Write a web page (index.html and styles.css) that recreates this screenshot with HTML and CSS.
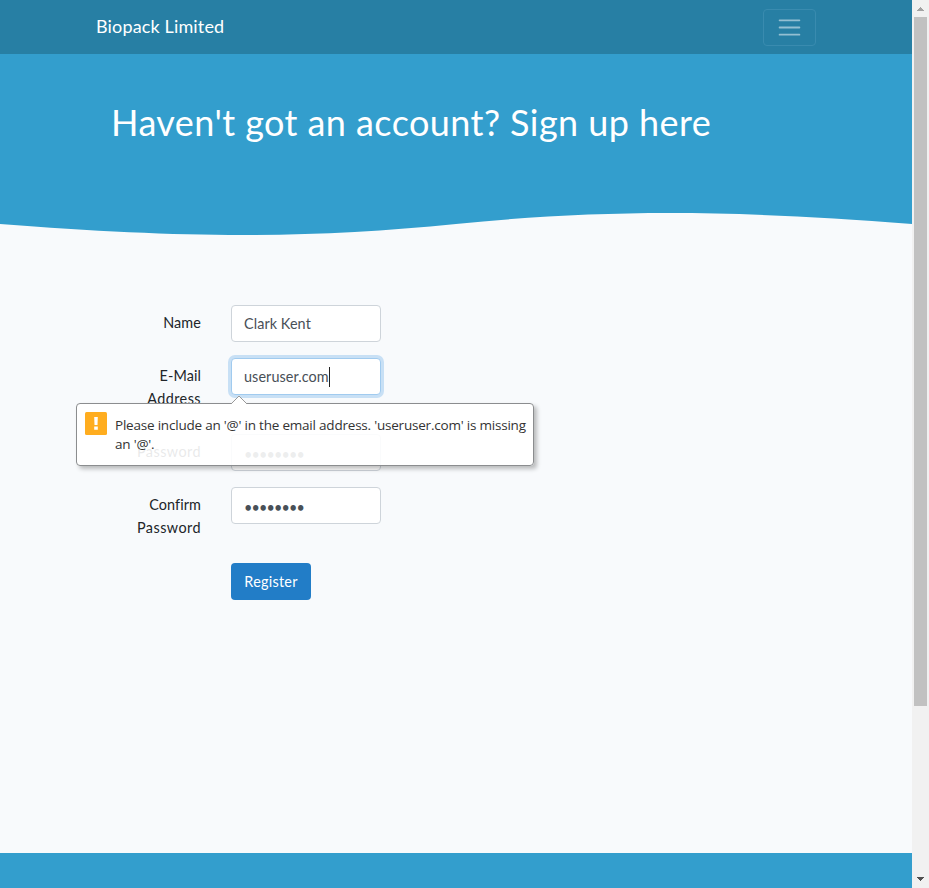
FILE: index.html
```html
<!DOCTYPE html>
<html lang="en">
<head>
<meta charset="utf-8">
<title>Biopack Limited</title>
<link rel="stylesheet" href="styles.css">
</head>
<body>
<div class="page">
  <nav class="navbar">
    <a class="brand">Biopack Limited</a>
    <button class="toggler" type="button" aria-label="Toggle navigation">
      <svg width="27" height="27" viewBox="0 0 30 30"><path d="M4 7h22M4 15h22M4 23h22" stroke="#fff" stroke-opacity=".5" stroke-width="2" stroke-linecap="round" stroke-miterlimit="10"/></svg>
    </button>
  </nav>
  <header class="hero"><h1>Haven't got an account? Sign up here</h1></header>
  <svg class="wave" width="912" height="24" viewBox="0 212 912 24"><path d="M0 212V224C186 238.6 310 238.6 456 224C602 209.4 726 209.4 912 224V212Z" fill="#339ecd"/></svg>
  <main class="form">
    <div class="row"><label for="name">Name</label><input id="name" class="control" value="Clark Kent"></div>
    <div class="row">
      <label for="email">E-Mail <span class="wide">Address</span></label>
      <div class="field">
        <input id="email" class="control focused" value="useruser.com">
        <i class="caret"></i>
        <div class="bubble">
          <svg class="arrow" width="18" height="9" viewBox="0 0 18 9"><path d="M1 9L9 1L17 9" fill="#fff" stroke="#999"/></svg>
          <svg class="warn" width="22" height="23" viewBox="0 0 22 23"><rect width="22" height="23" rx="1.5" fill="#ffad1f"/><path d="M9.2 5h3.6l-.3 8h-3zM9.2 14.5h3.6v3.2H9.2z" fill="#fff"/></svg>
          <p>Please include an '@' in the email address. 'useruser.com' is missing<br>an '@'.</p>
        </div>
      </div>
    </div>
    <div class="row"><label for="pw"><span class="wide">Password</span></label><input id="pw" class="control dots" type="password" value="password"></div>
    <div class="row"><label for="pw2">Confirm <span class="wide">Password</span></label><input id="pw2" class="control dots" type="password" value="password"></div>
    <button class="submit" type="button">Register</button>
  </main>
  <footer class="footer"></footer>
</div>
<aside class="scrollbar">
  <svg width="17" height="17" viewBox="0 0 17 17"><path d="M5 11V10h1V9h1V8h1V7h1v1h1v1h1v1h1v1z" fill="#a3a3a3"/></svg>
  <div class="thumb"></div>
  <svg class="down" width="17" height="17" viewBox="0 0 17 17"><path d="M5 6h7v1h-1v1h-1v1H9v1H8V9H7V8H6V7H5z" fill="#505050"/></svg>
</aside>
</body>
</html>
```
FILE: styles.css
```css
* { box-sizing: border-box; }
body {
  margin: 0;
  height: 888px;
  display: flex;
  overflow: hidden;
  background: #f8fafc;
  color: #212529;
  font: 14.4px/23px Lato, "Open Sans", sans-serif;
}
svg { display: block; }
.page { width: 912px; display: flex; flex-direction: column; }
.navbar {
  height: 54px;
  flex: none;
  display: flex;
  align-items: center;
  justify-content: space-between;
  padding: 0 96px;
  background: #277fa4;
}
.brand { padding-bottom: 2px; color: #fff; font-size: 18px; letter-spacing: .15px; white-space: nowrap; }
.toggler {
  width: 53px;
  height: 37px;
  margin-top: 1px;
  display: grid;
  place-items: center;
  padding: 0;
  background: none;
  border: 1px solid #398baf;
  border-radius: 4px;
}
.hero { height: 158px; flex: none; background: #339ecd; padding: 47px 111px 0; }
h1 { margin: 0; color: #fff; font-size: 36px; font-weight: 400; line-height: 43px; letter-spacing: .43px; white-space: nowrap; }
.wave { flex: none; }
.form { flex: 1; padding: 69px 111px 0; }
.row { display: flex; align-items: flex-start; gap: 30px; margin-bottom: 16px; }
label { width: 90px; padding: 6px 0 8px; text-align: right; letter-spacing: .1px; }
.wide { letter-spacing: .45px; }
.control {
  display: block;
  width: 150px;
  height: 37px;
  padding: 6px 12px;
  border: 1px solid #ced4da;
  border-radius: 4px;
  background: #fff;
  color: #495057;
  font: inherit;
  letter-spacing: .08px;
  outline: 0;
}
.dots { padding: 8px 12px 4px; letter-spacing: -.85px; }
.focused { border-color: #a1cbef; box-shadow: 0 0 0 3px #c8e0f5; }
.field { position: relative; }
.caret { position: absolute; left: 98px; top: 9px; width: 1px; height: 20px; background: #222; }
.bubble {
  position: absolute;
  z-index: 1;
  left: -155px;
  top: 45px;
  width: 458px;
  height: 63px;
  display: flex;
  gap: 8px;
  padding: 8px;
  background: rgba(255, 255, 255, .9);
  border: 1px solid #8b8d8f;
  border-radius: 4px;
  box-shadow: 3px 3px 4px rgba(0, 0, 0, .25);
  color: #333;
  font: 13.5px/19px "Open Sans", sans-serif;
  letter-spacing: -.21px;
}
.bubble p { margin: 4px 0 0; white-space: nowrap; }
.warn { flex: none; }
.arrow { position: absolute; left: 153px; top: -9px; }
.submit {
  display: block;
  width: 80px;
  height: 37px;
  margin-left: 120px;
  padding: 0;
  border: 0;
  border-radius: 4px;
  background: #227dc7;
  color: #fff;
  font: inherit;
  letter-spacing: .25px;
}
.footer { height: 35px; flex: none; background: #339ecd; }
.scrollbar { width: 17px; display: flex; flex-direction: column; background: #f1f1f1; }
.thumb { height: 689px; margin: 0 2px; background: #c1c1c1; }
.down { margin-top: auto; }
```
